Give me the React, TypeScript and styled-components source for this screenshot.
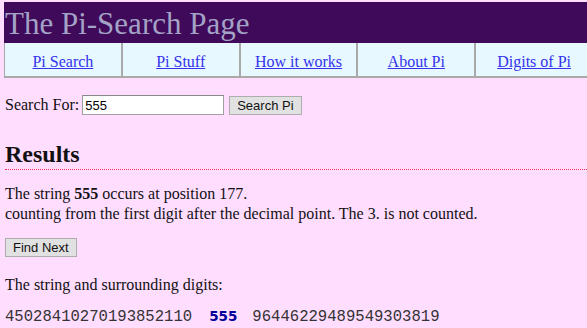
import React from "react";
import styled, { createGlobalStyle } from "styled-components";

const Global = createGlobalStyle`
  html, body {
    margin: 0;
    padding: 0;
    background: #ffddff;
    overflow: hidden;
  }
  body {
    font-family: "Liberation Serif", "Times New Roman", serif;
    font-size: 16px;
    color: #111;
  }
`;

const Page = styled.div`
  width: 587px;
  height: 328px;
  overflow: hidden;
  padding: 2px 0 0 4px;
  box-sizing: border-box;
`;

const Frame = styled.div`
  width: 590px;
`;

const Header = styled.div`
  background: #400a5a;
  height: 41px;
  display: flex;
  align-items: center;
  padding-left: 1px;
`;

const Title = styled.h1`
  margin: 2px 0 0;
  font-family: "Liberation Serif", "Times New Roman", serif;
  font-weight: normal;
  font-size: 31px;
  color: #a3a3c6;
`;

const Nav = styled.nav`
  display: grid;
  grid-template-columns: repeat(5, 1fr);
  height: 33px;
  border-left: 1px solid #a9a9a9;
  border-bottom: 2px solid #a9a9a9;
  box-sizing: content-box;
`;

const NavCell = styled.div`
  background: #e8f8ff;
  border-right: 2px solid #a9a9a9;
  display: flex;
  align-items: center;
  justify-content: center;
  padding-top: 4px;
  box-sizing: border-box;
`;

const NavLink = styled.a`
  color: #3333ee;
  text-decoration: underline;
  font-size: 16px;
  cursor: pointer;
`;

const Content = styled.main`
  padding: 17px 0 0 1px;
`;

const SearchRow = styled.form`
  display: flex;
  align-items: center;
  gap: 3px;
  margin: 0;
`;

const Label = styled.label`
  font-size: 16px;
`;

const Input = styled.input`
  width: 136px;
  height: 16px;
  padding: 1px 2px;
  border: 1px solid #a0a0a0;
  border-top-color: #888;
  font-family: "Liberation Sans", Arial, sans-serif;
  font-size: 13px;
  color: #000;
  background: #fff;
  outline: none;
`;

const Button = styled.button`
  font-family: "Liberation Sans", Arial, sans-serif;
  font-size: 13px;
  color: #111;
  background: #e1e1e1;
  border: 1px solid #adadad;
  padding: 0 7px;
  height: 19px;
  margin-left: ${(p: { $ml?: number }) => p.$ml ?? 0}px;
`;

const Heading = styled.h2`
  margin: 25px 0 0;
  font-size: 24px;
  font-weight: bold;
  color: #111;
  line-height: 28px;
  padding-bottom: 1px;
  border-bottom: 1px dotted #ee3344;
`;

const Para = styled.p`
  margin: ${(p: { $mt: number }) => p.$mt}px 0 0;
  font-size: 16px;
  line-height: 20px;
`;

const ButtonRow = styled.div`
  margin-top: 14px;
`;

const Digits = styled.div`
  margin-top: 13px;
  font-family: "Liberation Mono", "Courier New", monospace;
  font-size: 15.6px;
  color: #333;
  white-space: pre;
`;

const Match = styled.span`
  font-family: "DejaVu Sans", Verdana, sans-serif;
  font-weight: bold;
  font-size: 13.5px;
  color: #00009a;
  margin: 0 15px 0 17px;
`;

export default function App() {
  const links = ["Pi Search", "Pi Stuff", "How it works", "About Pi", "Digits of Pi"];
  return (
    <>
      <Global />
      <Page>
        <Frame>
          <Header>
            <Title>The Pi-Search Page</Title>
          </Header>
          <Nav>
            {links.map((l) => (
              <NavCell key={l}>
                <NavLink>{l}</NavLink>
              </NavCell>
            ))}
          </Nav>
        </Frame>
        <Content>
          <SearchRow onSubmit={(e) => e.preventDefault()}>
            <Label>Search For:</Label>
            <Input defaultValue="555" />
            <Button type="submit" $ml={2}>Search Pi</Button>
          </SearchRow>
          <Heading>Results</Heading>
          <Para $mt={14}>
            The string <b>555</b> occurs at position 177.
            <br />
            counting from the first digit after the decimal point. The 3. is not counted.
          </Para>
          <ButtonRow>
            <Button type="button">Find Next</Button>
          </ButtonRow>
          <Para $mt={18}>The string and surrounding digits:</Para>
          <Digits>
            45028410270193852110<Match>555</Match>96446229489549303819
          </Digits>
        </Content>
      </Page>
    </>
  );
}
